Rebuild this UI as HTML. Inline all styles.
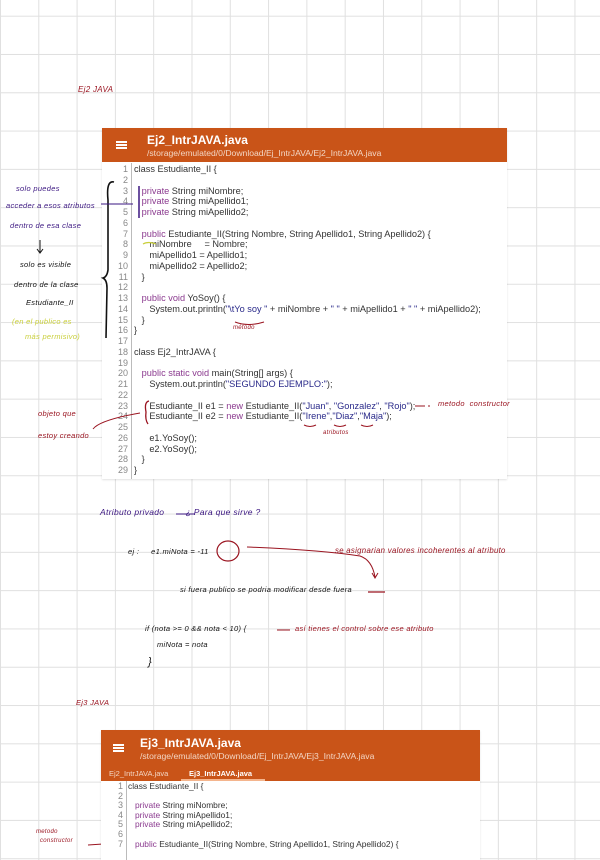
<!DOCTYPE html>
<html><head><meta charset="utf-8"><style>
*{margin:0;padding:0;box-sizing:border-box}
body{width:600px;height:848px;overflow:hidden;position:relative;font-family:"Liberation Sans",sans-serif;
background-color:#fff;
background-image:linear-gradient(to right,#e0e0e0 1px,transparent 1px),linear-gradient(to bottom,#e0e0e0 1px,transparent 1px);
background-size:38.3px 38.3px;background-position:0 15.7px}
.box{position:absolute;background:#fff;box-shadow:0 1px 2px rgba(0,0,0,.12)}
.hdr{background:#c95418;color:#fff;position:relative}
.hdr .t{position:absolute;font-weight:bold;font-size:12px}
.hdr .p{position:absolute;font-size:8.6px;color:#f3d6c4}
.ham{position:absolute;width:11px;height:8px;border-top:2px solid #fff;border-bottom:2px solid #fff}
.ham:after{content:"";position:absolute;left:0;right:0;top:1px;border-top:2px solid #fff}
.code{position:absolute;font-size:9.2px;color:#333;white-space:pre}
.ln{position:absolute;font-size:9px;color:#888;text-align:right;width:14px;white-space:pre}
.k{color:#8b3a8f}.s{color:#2a2a8a}
.h{position:absolute;font-family:"Liberation Sans",sans-serif;font-style:italic;font-size:7.5px;white-space:nowrap;letter-spacing:.3px}
.pu{color:#3a1580}.rd{color:#9a1420}.bk{color:#111}.yl{color:#c9cf3a}
</style></head><body>

<div class="h rd" style="left:78px;top:85px;font-size:8px">Ej2 JAVA</div>

<div class="box" style="left:102px;top:128px;width:405px;height:351px">
 <div class="hdr" style="height:34px">
  <div class="ham" style="left:14px;top:13px"></div>
  <div class="t" style="left:45px;top:5px">Ej2_IntrJAVA.java</div>
  <div class="p" style="left:45px;top:20px">/storage/emulated/0/Download/Ej_IntrJAVA/Ej2_IntrJAVA.java</div>
 </div>
 <div style="position:absolute;left:29px;top:35px;bottom:0;border-left:1px solid #bbb"></div>
 <div class="ln" style="left:12px;top:36px;line-height:10.75px">1
2
3
4
5
6
7
8
9
10
11
12
13
14
15
16
17
18
19
20
21
22
23
24
25
26
27
28
29</div>
 <div class="code" style="left:32px;top:36px;line-height:10.75px">class Estudiante_II {

   <span class="k">private</span> String miNombre;
   <span class="k">private</span> String miApellido1;
   <span class="k">private</span> String miApellido2;

   <span class="k">public</span> Estudiante_II(String Nombre, String Apellido1, String Apellido2) {
      miNombre     = Nombre;
      miApellido1 = Apellido1;
      miApellido2 = Apellido2;
   }

   <span class="k">public void</span> YoSoy() {
      System.out.println(<span class="s">"\tYo soy "</span> + miNombre + <span class="s">" "</span> + miApellido1 + <span class="s">" "</span> + miApellido2);
   }
}

class Ej2_IntrJAVA {

   <span class="k">public static void</span> main(String[] args) {
      System.out.println(<span class="s">"SEGUNDO EJEMPLO:"</span>);

      Estudiante_II e1 = <span class="k">new</span> Estudiante_II(<span class="s">"Juan"</span>, <span class="s">"Gonzalez"</span>, <span class="s">"Rojo"</span>);
      Estudiante_II e2 = <span class="k">new</span> Estudiante_II(<span class="s">"Irene"</span>,<span class="s">"Diaz"</span>,<span class="s">"Maja"</span>);

      e1.YoSoy();
      e2.YoSoy();
   }
}</div>
</div>

<svg width="600" height="848" style="position:absolute;left:0;top:0" fill="none">
 <path d="M114 182 Q106 180 108 200 L108 270 Q107 277 103 278 Q107 280 107 288 L106 338" stroke="#111" stroke-width="1.6"/>
 <path d="M139 186 L139 218" stroke="#3a1580" stroke-width="1.5"/>
 <path d="M101 204 L133 204" stroke="#3a1580" stroke-width="1"/>
 <path d="M40 240 L40 252 M37 249 L40 253 L43 249" stroke="#111" stroke-width="1"/>
 <path d="M143 244 Q148 241 156 244" stroke="#c9cf3a" stroke-width="1.2"/>
 <path d="M235 322 Q248 327 264 322" stroke="#9a1420" stroke-width="1"/>
 <path d="M149 401 Q144 402 146 412 Q145 420 148 424" stroke="#9a1420" stroke-width="1.3"/>
 <path d="M93 429 Q100 420 140 413" stroke="#9a1420" stroke-width="1"/>
 <path d="M415 406 L425 406 M428 406 L430 406" stroke="#9a1420" stroke-width="1"/>
 <path d="M304 425 Q310 428 316 425 M334 425 Q340 428 346 425 M361 425 Q367 428 373 425" stroke="#9a1420" stroke-width="1"/>
 <path d="M176 514 L195 514" stroke="#3a1580" stroke-width="1"/>
 <ellipse cx="228" cy="551" rx="11" ry="10" stroke="#9a1420" stroke-width="1.2"/>
 <path d="M247 547 Q320 550 360 556 Q372 560 375 577 M372 573 L375 578 L378 573" stroke="#9a1420" stroke-width="1"/>
 <path d="M368 592 L385 592" stroke="#9a1420" stroke-width="1.3"/>
 <path d="M277 630 L290 630" stroke="#9a1420" stroke-width="1"/>
 <path d="M88 845 L118 843 L122 842" stroke="#9a1420" stroke-width="1"/>
</svg>

<div class="h pu" style="left:16px;top:184px">solo puedes</div>
<div class="h pu" style="left:6px;top:201px">acceder a esos atributos</div>
<div class="h pu" style="left:10px;top:221px">dentro de esa clase</div>
<div class="h bk" style="left:20px;top:260px">solo es visible</div>
<div class="h bk" style="left:14px;top:280px">dentro de la clase</div>
<div class="h bk" style="left:26px;top:298px">Estudiante_II</div>
<div class="h yl" style="left:12px;top:317px">(en el publico es</div>
<div class="h yl" style="left:25px;top:332px">más permisivo)</div>
<div class="h rd" style="left:233px;top:325px;font-size:6px">método</div>
<div class="h rd" style="left:38px;top:409px">objeto que</div>
<div class="h rd" style="left:38px;top:431px">estoy creando</div>
<div class="h rd" style="left:438px;top:399px">metodo &nbsp;constructor</div>
<div class="h rd" style="left:323px;top:430px;font-size:6px">atributos</div>

<div class="h pu" style="left:100px;top:507px;font-size:8.5px">Atributo privado &nbsp;&nbsp;&nbsp;&nbsp;&nbsp;&nbsp;&nbsp;¿ Para que sirve ?</div>
<div class="h bk" style="left:128px;top:547px">ej : &nbsp;&nbsp;&nbsp;&nbsp;e1.miNota = -11</div>
<div class="h rd" style="left:335px;top:546px;font-size:7.8px">se asignarian valores incoherentes al atributo</div>
<div class="h bk" style="left:180px;top:585px">si fuera publico se podria modificar desde fuera</div>
<div class="h bk" style="left:145px;top:624px">if (nota &gt;= 0 &amp;&amp; nota &lt; 10) {</div>
<div class="h rd" style="left:295px;top:624px">así tienes el control sobre ese atributo</div>
<div class="h bk" style="left:157px;top:640px">miNota = nota</div>
<div class="h bk" style="left:148px;top:656px;font-size:11px">}</div>
<div class="h rd" style="left:76px;top:698px">Ej3 JAVA</div>
<div class="h rd" style="left:36px;top:829px;font-size:6px">metodo</div>
<div class="h rd" style="left:40px;top:838px;font-size:6px">constructor</div>

<div class="box" style="left:101px;top:730px;width:379px;height:130px">
 <div class="hdr" style="height:51px">
  <div class="ham" style="left:12px;top:14px"></div>
  <div class="t" style="left:39px;top:6px">Ej3_IntrJAVA.java</div>
  <div class="p" style="left:39px;top:21px">/storage/emulated/0/Download/Ej_IntrJAVA/Ej3_IntrJAVA.java</div>
  <div style="position:absolute;left:8px;top:39px;font-size:7.5px;color:#f3d6c4">Ej2_IntrJAVA.java</div>
  <div style="position:absolute;left:88px;top:39px;font-size:7.5px;color:#fff;font-weight:bold">Ej3_IntrJAVA.java</div>
  <div style="position:absolute;left:80px;top:49px;width:84px;border-top:2px solid #f4b58e"></div>
 </div>
 <div style="position:absolute;left:25px;top:51px;bottom:0;border-left:1px solid #bbb"></div>
 <div class="ln" style="left:8px;top:52px;line-height:9.6px">1
2
3
4
5
6
7</div>
 <div class="code" style="left:27px;top:52px;line-height:9.6px;font-size:8.4px">class Estudiante_II {

   <span class="k">private</span> String miNombre;
   <span class="k">private</span> String miApellido1;
   <span class="k">private</span> String miApellido2;

   <span class="k">public</span> Estudiante_II(String Nombre, String Apellido1, String Apellido2) {</div>
</div>
</body></html>
